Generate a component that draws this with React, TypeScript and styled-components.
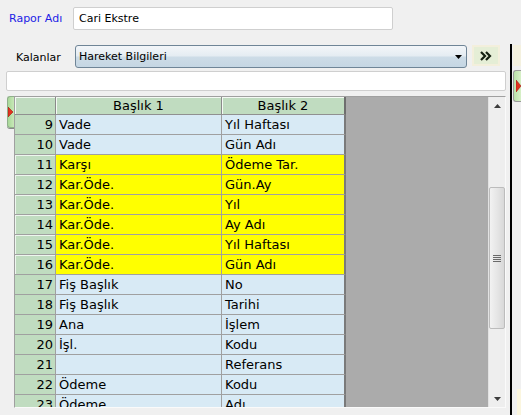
import styled, { createGlobalStyle } from 'styled-components';

const GlobalStyle = createGlobalStyle`
  html, body {
    margin: 0;
    padding: 0;
    background: #f0f0f0;
  }
  * {
    box-sizing: border-box;
  }
`;

type Tone = 'blue' | 'yellow';

const rows: { no: number; a: string; b: string; tone: Tone }[] = [
  { no: 9, a: 'Vade', b: 'Yıl Haftası', tone: 'blue' },
  { no: 10, a: 'Vade', b: 'Gün Adı', tone: 'blue' },
  { no: 11, a: 'Karşı', b: 'Ödeme Tar.', tone: 'yellow' },
  { no: 12, a: 'Kar.Öde.', b: 'Gün.Ay', tone: 'yellow' },
  { no: 13, a: 'Kar.Öde.', b: 'Yıl', tone: 'yellow' },
  { no: 14, a: 'Kar.Öde.', b: 'Ay Adı', tone: 'yellow' },
  { no: 15, a: 'Kar.Öde.', b: 'Yıl Haftası', tone: 'yellow' },
  { no: 16, a: 'Kar.Öde.', b: 'Gün Adı', tone: 'yellow' },
  { no: 17, a: 'Fiş Başlık', b: 'No', tone: 'blue' },
  { no: 18, a: 'Fiş Başlık', b: 'Tarihi', tone: 'blue' },
  { no: 19, a: 'Ana', b: 'İşlem', tone: 'blue' },
  { no: 20, a: 'İşl.', b: 'Kodu', tone: 'blue' },
  { no: 21, a: '', b: 'Referans', tone: 'blue' },
  { no: 22, a: 'Ödeme', b: 'Kodu', tone: 'blue' },
  { no: 23, a: 'Ödeme', b: 'Adı', tone: 'blue' },
];

const Page = styled.div`
  width: 521px;
  height: 415px;
  overflow: hidden;
  display: flex;
  flex-direction: column;
  font-family: 'DejaVu Sans', Verdana, sans-serif;
  font-size: 11px;
  color: #000;
`;

const TopRow = styled.div`
  display: flex;
  align-items: center;
  padding: 7px 0 0 9px;
`;

const BlueLabel = styled.span`
  width: 64px;
  color: #1c1ce6;
`;

const TextInput = styled.input<{ $width: number; $height: number }>`
  width: ${({ $width }) => $width}px;
  height: ${({ $height }) => $height}px;
  border: 1px solid #cfcfcf;
  border-radius: 2px;
  background: #fff;
  padding: 0 5px;
  font-family: 'DejaVu Sans', Verdana, sans-serif;
  font-size: 11px;
  color: #000;
  outline: none;
`;

const Body = styled.div`
  display: flex;
  margin-top: 14px;
  flex: 1;
  min-height: 0;
`;

const Main = styled.div`
  width: 510px;
  display: flex;
  flex-direction: column;
`;

const Divider = styled.div`
  width: 2px;
  background: #000;
`;

const RightStrip = styled.div`
  flex: 1;
  display: flex;
  flex-direction: column;
  padding-top: 1px;
  padding-left: 1px;
`;

const StripButton = styled.div`
  height: 21px;
  background: #f4f1df;
`;

const StripTab = styled.div`
  margin-top: 4px;
  height: 32px;
  border: 1px solid #9a9a9a;
  border-right: none;
  border-radius: 3px 0 0 3px;
  background: linear-gradient(90deg, #b9e0a8, #d8f0c8);
  display: flex;
  align-items: center;
  padding-left: 2px;
`;

const StripFoot = styled.div`
  margin-top: auto;
  margin-left: 4px;
  height: 26px;
  background: #fbf6df;
`;

const SelectRow = styled.div`
  display: flex;
  align-items: flex-start;
  padding-top: 1px;
`;

const RowLabel = styled.span`
  width: 75px;
  padding-left: 16px;
  line-height: 25px;
`;

const Select = styled.div`
  width: 392px;
  height: 23px;
  border: 1px solid #6f8597;
  border-radius: 3px;
  background: linear-gradient(#f3f6f9 0%, #e4ecf2 48%, #cddce7 52%, #c5d6e3 100%);
  display: flex;
  align-items: center;
  padding: 0 4px 0 3px;
`;

const SelectText = styled.span`
  flex: 1;
`;

const GoButton = styled.div`
  margin-left: 5px;
  width: 28px;
  height: 21px;
  border: 2px solid #f3efdc;
  background: #e5eed6;
  display: flex;
  align-items: center;
  justify-content: center;
`;

const FilterRow = styled.div`
  padding: 1px 0 0 6px;
`;

const GridArea = styled.div`
  display: flex;
  margin-top: 5px;
  height: 312px;
`;

const SideTab = styled.div`
  margin-left: 7px;
  width: 7px;
  height: 32px;
  border: 1px solid #8fb08a;
  border-right: none;
  border-radius: 3px 0 0 3px;
  background: linear-gradient(90deg, #a8d898, #c8e8b8);
  display: flex;
  align-items: center;
  box-shadow: 0 1px 0 #8a8a8a;
`;

const GridFrame = styled.div`
  width: 492px;
  display: flex;
  border-left: 1px solid #a0a0a0;
  border-top: 1px solid #a0a0a0;
  border-right: 1px solid #fafafa;
  border-bottom: 1px solid #fafafa;
  overflow: hidden;
`;

const Table = styled.div`
  width: 473px;
  background: #ababab;
  font-size: 13px;
  overflow: hidden;
`;

const Row = styled.div`
  display: flex;
`;

const Cell = styled.div<{ $w: number; $tone?: Tone; $last?: boolean }>`
  width: ${({ $w }) => $w}px;
  height: 20px;
  line-height: 19px;
  padding-left: 3px;
  white-space: nowrap;
  overflow: hidden;
  background: ${({ $tone }) => ($tone === 'yellow' ? '#ffff00' : '#d8eaf5')};
  border-bottom: 1px solid #a0a0a0;
  border-right: ${({ $last }) => ($last ? '2px solid #7a7a7a' : '1px solid #a0a0a0')};
`;

const NumCell = styled.div<{ $raised: boolean }>`
  width: 41px;
  height: 20px;
  line-height: 19px;
  padding-right: 2px;
  text-align: right;
  background: #c0dcc0;
  border-bottom: 1px solid #a0a0a0;
  border-right: 1px solid #a0a0a0;
  box-shadow: ${({ $raised }) => ($raised ? 'inset 1px 1px 0 #eef6ee' : 'none')};
`;

const HeadCell = styled.div<{ $w: number; $last?: boolean }>`
  width: ${({ $w }) => $w}px;
  height: 18px;
  line-height: 17px;
  text-align: center;
  background: #c0dcc0;
  border-bottom: 1px solid #909090;
  border-right: ${({ $last }) => ($last ? '2px solid #6e6e6e' : '1px solid #8a8a8a')};
  box-shadow: inset 1px 1px 0 #f4faf4;
`;

const Scrollbar = styled.div`
  width: 17px;
  background: #eeeeee;
  display: flex;
  flex-direction: column;
  border-left: 1px solid #e2e2e2;
`;

const ArrowBox = styled.div`
  height: 17px;
  display: flex;
  align-items: center;
  justify-content: center;
`;

const Track = styled.div`
  flex: 1;
`;

const Thumb = styled.div<{ $top: number; $height: number }>`
  margin-top: ${({ $top }) => $top}px;
  height: ${({ $height }) => $height}px;
  border: 1px solid #bcbcbc;
  border-radius: 2px;
  background: linear-gradient(90deg, #f2f2f2 0%, #e6e6e6 50%, #d8d8d8 100%);
  display: flex;
  align-items: center;
  justify-content: center;
`;

const RedArrow = ({ w, h }: { w: number; h: number }) => (
  <svg width={w} height={h} viewBox={`0 0 ${w} ${h}`}>
    <polygon points={`0,0 ${w},${h / 2} 0,${h}`} fill="#e2321e" stroke="#a01810" strokeWidth="0.6" />
  </svg>
);

const App = () => {
  return (
    <Page>
      <GlobalStyle />
      <TopRow>
        <BlueLabel>Rapor Adı</BlueLabel>
        <TextInput readOnly value="Cari Ekstre" $width={320} $height={23} />
      </TopRow>
      <Body>
        <Main>
          <SelectRow>
            <RowLabel>Kalanlar</RowLabel>
            <Select>
              <SelectText>Hareket Bilgileri</SelectText>
              <svg width="7" height="4" viewBox="0 0 7 4">
                <polygon points="0,0 7,0 3.5,4" fill="#000" />
              </svg>
            </Select>
            <GoButton>
              <svg width="12" height="10" viewBox="0 0 12 10">
                <path d="M1 1 L5 5 L1 9 M6 1 L10 5 L6 9" fill="none" stroke="#142010" strokeWidth="2.2" />
              </svg>
            </GoButton>
          </SelectRow>
          <FilterRow>
            <TextInput readOnly value="" $width={500} $height={20} />
          </FilterRow>
          <GridArea>
            <SideTab>
              <RedArrow w={5} h={10} />
            </SideTab>
            <GridFrame>
              <Table>
                <Row>
                  <HeadCell $w={41} />
                  <HeadCell $w={166}>Başlık 1</HeadCell>
                  <HeadCell $w={124} $last>
                    Başlık 2
                  </HeadCell>
                </Row>
                {rows.map((r) => (
                  <Row key={r.no}>
                    <NumCell $raised={r.tone === 'yellow'}>{r.no}</NumCell>
                    <Cell $w={166} $tone={r.tone}>
                      {r.a}
                    </Cell>
                    <Cell $w={124} $tone={r.tone} $last>
                      {r.b}
                    </Cell>
                  </Row>
                ))}
              </Table>
              <Scrollbar>
                <ArrowBox>
                  <svg width="7" height="4" viewBox="0 0 7 4">
                    <polygon points="3.5,0 7,4 0,4" fill="#3c3c3c" />
                  </svg>
                </ArrowBox>
                <Track>
                  <Thumb $top={73} $height={142}>
                    <svg width="8" height="8" viewBox="0 0 8 8">
                      <path d="M0 1.5 H8 M0 3.5 H8 M0 5.5 H8 M0 7.5 H8" stroke="#6a6a6a" strokeWidth="1" />
                    </svg>
                  </Thumb>
                </Track>
                <ArrowBox>
                  <svg width="7" height="4" viewBox="0 0 7 4">
                    <polygon points="0,0 7,0 3.5,4" fill="#3c3c3c" />
                  </svg>
                </ArrowBox>
              </Scrollbar>
            </GridFrame>
          </GridArea>
        </Main>
        <Divider />
        <RightStrip>
          <StripButton />
          <StripTab>
            <RedArrow w={5} h={12} />
          </StripTab>
          <StripFoot />
        </RightStrip>
      </Body>
    </Page>
  );
};

export default App;
